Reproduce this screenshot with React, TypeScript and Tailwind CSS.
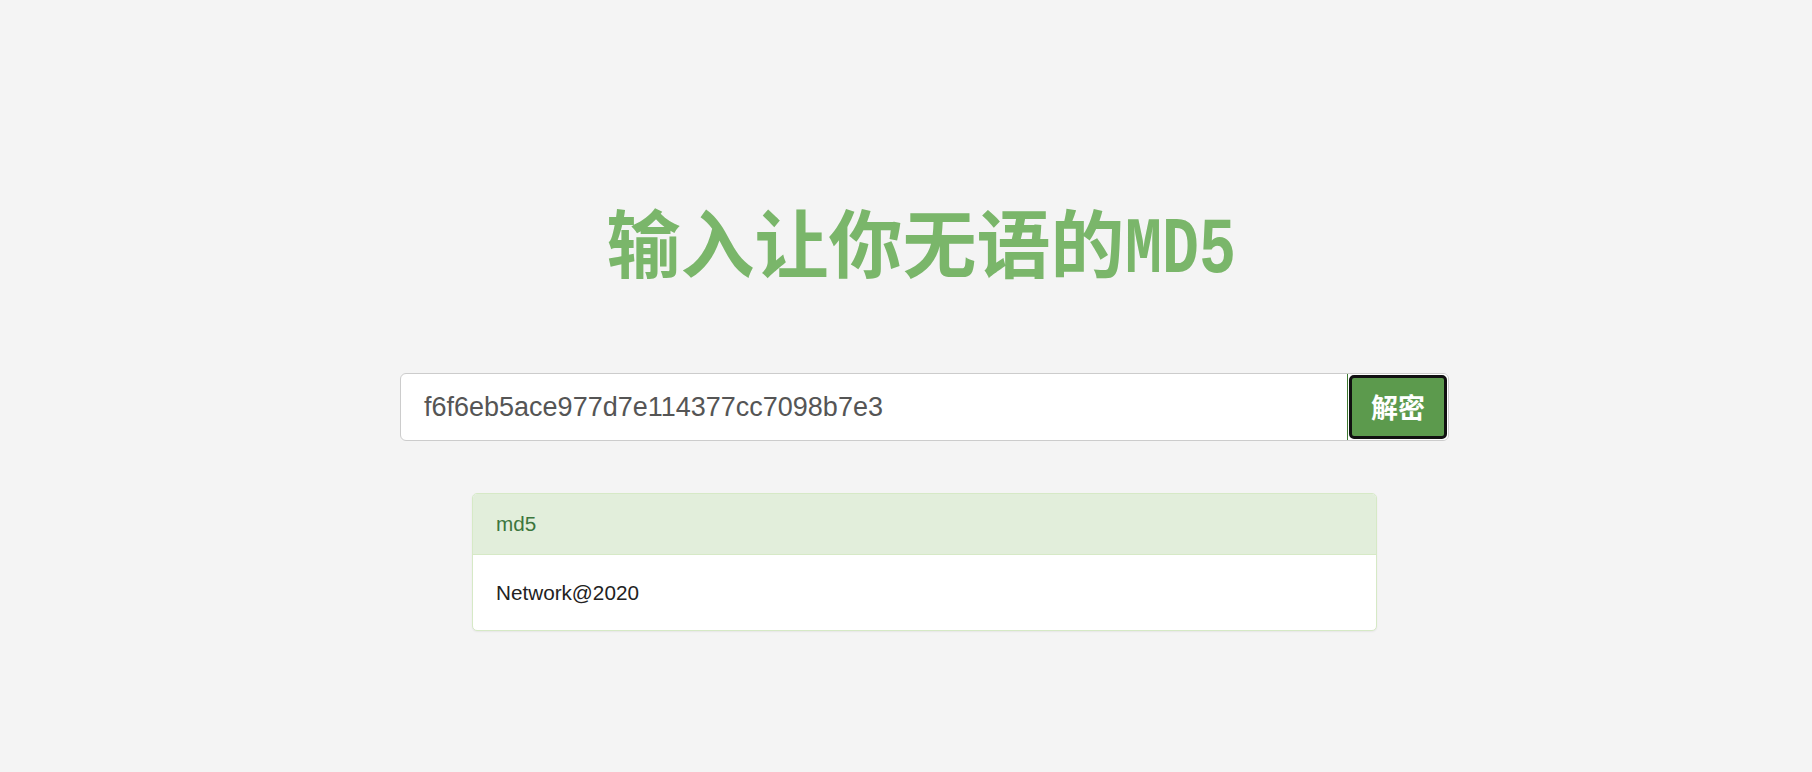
export default function App() {
  return (
    <div className="min-h-screen w-full bg-[#f4f4f4] pt-[203px]" style={{ fontFamily: '"Liberation Sans", Arial, sans-serif' }}>
      <div className="ml-[396px] flex w-[1049px] justify-center">
        <h1 className="h-[74px] whitespace-nowrap text-[74px] font-bold leading-[74px] text-[#7ab66a]" style={{ fontFamily: '"Noto Sans CJK SC", sans-serif' }}>
          输入让你无语的
          <span className="inline-block w-[110px]">
            <span className="inline-block origin-left scale-x-[0.77] text-[80px] leading-[74px]" style={{ fontFamily: '"Liberation Mono", "DejaVu Sans Mono", monospace' }}>MD5</span>
          </span>
        </h1>
      </div>

      <div className="ml-[400px] mt-[96px] flex h-[68px] w-[1049px] overflow-hidden rounded-[6px] border border-[#cccccc] bg-white">
        <div className="flex flex-1 items-center pl-[23px] text-[27px] text-[#555555]">
          f6f6eb5ace977d7e114377cc7098b7e3
        </div>
        <button className="relative flex h-full w-[101px] items-center justify-center border-l border-[#3f7a32] bg-white">
          <span className="absolute inset-x-[1px] inset-y-[1px] rounded-[5px] border-[3px] border-[#111111] bg-[#5c9a4d]" />
          <span className="relative text-[27px] font-bold text-white" style={{ fontFamily: '"Noto Sans CJK SC", sans-serif' }}>解密</span>
        </button>
      </div>

      <div className="ml-[472px] mt-[52px] w-[905px] overflow-hidden rounded-[5px] border border-[#d6e9c6] bg-white shadow-[0_1px_2px_rgba(0,0,0,0.06)]">
        <div className="flex h-[61px] items-center border-b border-[#d6e9c6] bg-[#e2eedb] pl-[23px] text-[20.7px] text-[#3c763d]">
          md5
        </div>
        <div className="flex h-[75px] items-center pl-[23px] text-[20.7px] text-[#222222]">
          Network@2020
        </div>
      </div>
    </div>
  );
}
